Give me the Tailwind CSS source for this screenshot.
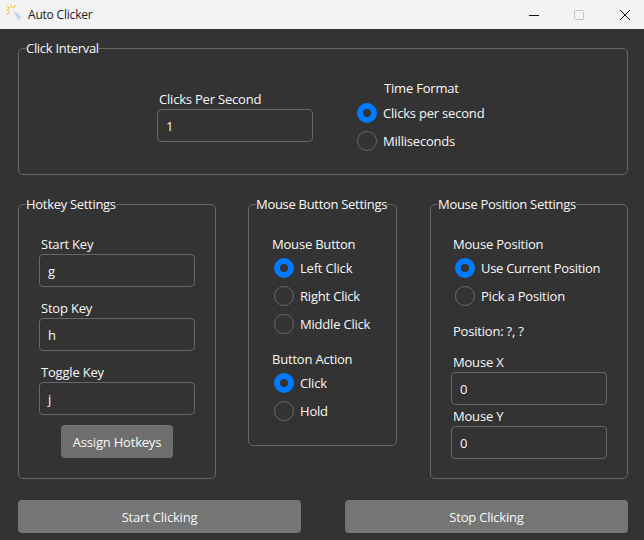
<!DOCTYPE html>
<html lang="en">
<head>
  <meta charset="UTF-8" />
  <title>Auto Clicker</title>
  <script src="https://cdn.jsdelivr.net/npm/@tailwindcss/browser@4"></script>
</head>
<body class="w-[644px] h-[540px] overflow-hidden bg-[#333333] text-[13px] leading-5 tracking-[-0.2px] text-[#f8f8f8] font-['Open_Sans','Noto_Sans',sans-serif]">
  <!-- title bar -->
  <header class="h-[29px] bg-[#f3f3f3] flex items-center text-[#1a1a1a] text-[12px]">
    <svg class="ml-[5px] mb-[5px] w-[18px] h-[18px]" viewBox="0 0 18 18">
      <path d="M8 7 L17.5 14.5 L14.5 15 L13.5 18 Z" fill="#bcd9ec" stroke="#d9e8f2" stroke-width="0.5"/>
      <path d="M6 1.5 V5 M1 7 H4.5 M2 3 L4.5 5.5 M10.5 2.5 L8 5 M2 11.5 L4.5 9" stroke="#f5cf4a" stroke-width="1.3" fill="none"/>
    </svg>
    <span class="ml-[5px]">Auto Clicker</span>
    <div class="ml-auto flex items-center">
      <svg class="w-[10px] h-[10px] mr-[35px]" viewBox="0 0 10 10"><path d="M0 5.5 H10" stroke="#111" stroke-width="1"/></svg>
      <svg class="w-[10px] h-[10px] mr-[36px]" viewBox="0 0 10 10"><rect x="0.5" y="0.5" width="9" height="9" rx="1" fill="none" stroke="#c4c4c4"/></svg>
      <svg class="w-[10px] h-[10px] mr-[14px]" viewBox="0 0 10 10"><path d="M0 0 L10 10 M10 0 L0 10" stroke="#111" stroke-width="1"/></svg>
    </div>
  </header>

  <main class="pl-[18px] pr-[16px] pt-[19px]">
    <!-- click interval -->
    <section class="relative h-[127px] border border-[#666666] rounded-[5px] flex">
      <span class="absolute left-[7px] -top-[11px] bg-[#333333] tracking-[-0.3px]">Click Interval</span>
      <div class="ml-[138px] mt-[40px] w-[156px]">
        <div class="ml-[2px] h-5">Clicks Per Second</div>
        <div class="h-[33px] border border-[#666666] rounded-[4px] pl-[8px] flex items-center">1</div>
      </div>
      <div class="ml-[44px] mt-[29px]">
        <div class="ml-[27px] h-5">Time Format</div>
        <div class="mt-[1px] h-7 flex items-center gap-[6px]"><span class="w-5 h-5 rounded-full border-[6px] border-[#007bff] bg-[#333333]"></span>Clicks per second</div>
        <div class="h-7 flex items-center gap-[6px]"><span class="w-5 h-5 rounded-full border-[1.5px] border-[#666666]"></span>Milliseconds</div>
      </div>
    </section>

    <div class="mt-[29px] flex items-start">
      <!-- hotkeys -->
      <section class="relative w-[198px] h-[275px] border border-[#666666] rounded-[5px] pl-5 pt-[29px]">
        <span class="absolute left-[7px] -top-[11px] bg-[#333333] tracking-[-0.3px]">Hotkey Settings</span>
        <div class="ml-[2px] h-5">Start Key</div>
        <div class="h-[33px] w-[156px] border border-[#666666] rounded-[4px] pl-[8px] flex items-center">g</div>
        <div class="ml-[2px] mt-[11px] h-5">Stop Key</div>
        <div class="h-[33px] w-[156px] border border-[#666666] rounded-[4px] pl-[8px] flex items-center">h</div>
        <div class="ml-[2px] mt-[11px] h-5">Toggle Key</div>
        <div class="h-[33px] w-[156px] border border-[#666666] rounded-[4px] pl-[8px] flex items-center">j</div>
        <div class="ml-[22px] mt-[10px] w-[112px] h-[33px] rounded-[4px] bg-[#6e6e6e] flex items-center justify-center">Assign Hotkeys</div>
      </section>

      <!-- mouse button -->
      <section class="relative ml-[32px] w-[149px] h-[242px] border border-[#666666] rounded-[5px] pl-[23px] pt-[29px]">
        <span class="absolute left-[7px] -top-[11px] bg-[#333333] tracking-[-0.3px]">Mouse Button Settings</span>
        <div class="h-5">Mouse Button</div>
        <div class="ml-[2px] h-7 flex items-center gap-[6px]"><span class="w-5 h-5 rounded-full border-[6px] border-[#007bff] bg-[#333333]"></span>Left Click</div>
        <div class="ml-[2px] h-7 flex items-center gap-[6px]"><span class="w-5 h-5 rounded-full border-[1.5px] border-[#666666]"></span>Right Click</div>
        <div class="ml-[2px] h-7 flex items-center gap-[6px]"><span class="w-5 h-5 rounded-full border-[1.5px] border-[#666666]"></span>Middle Click</div>
        <div class="mt-[11px] h-5">Button Action</div>
        <div class="ml-[2px] h-7 flex items-center gap-[6px]"><span class="w-5 h-5 rounded-full border-[6px] border-[#007bff] bg-[#333333]"></span>Click</div>
        <div class="ml-[2px] h-7 flex items-center gap-[6px]"><span class="w-5 h-5 rounded-full border-[1.5px] border-[#666666]"></span>Hold</div>
      </section>

      <!-- mouse position -->
      <section class="relative ml-[33px] w-[198px] h-[275px] border border-[#666666] rounded-[5px] pl-5 pt-[29px]">
        <span class="absolute left-[7px] -top-[11px] bg-[#333333] tracking-[-0.3px]">Mouse Position Settings</span>
        <div class="ml-[2px] h-5">Mouse Position</div>
        <div class="ml-[4px] h-7 flex items-center gap-[6px] tracking-[-0.3px]"><span class="w-5 h-5 rounded-full border-[6px] border-[#007bff] bg-[#333333]"></span>Use Current Position</div>
        <div class="ml-[4px] h-7 flex items-center gap-[6px]"><span class="w-5 h-5 rounded-full border-[1.5px] border-[#666666]"></span>Pick a Position</div>
        <div class="ml-[2px] mt-[11px] h-5">Position: ?, ?</div>
        <div class="ml-[2px] mt-[11px] h-5">Mouse X</div>
        <div class="h-[33px] w-[156px] border border-[#666666] rounded-[4px] pl-[8px] flex items-center">0</div>
        <div class="ml-[2px] mt-[1px] h-5">Mouse Y</div>
        <div class="h-[33px] w-[156px] border border-[#666666] rounded-[4px] pl-[8px] flex items-center">0</div>
      </section>
    </div>

    <footer class="mt-[21px] flex justify-between">
      <div class="w-[283px] h-[33px] rounded-[4px] bg-[#757575] flex items-center justify-center">Start Clicking</div>
      <div class="w-[283px] h-[33px] rounded-[4px] bg-[#757575] flex items-center justify-center">Stop Clicking</div>
    </footer>
  </main>
</body>
</html>
